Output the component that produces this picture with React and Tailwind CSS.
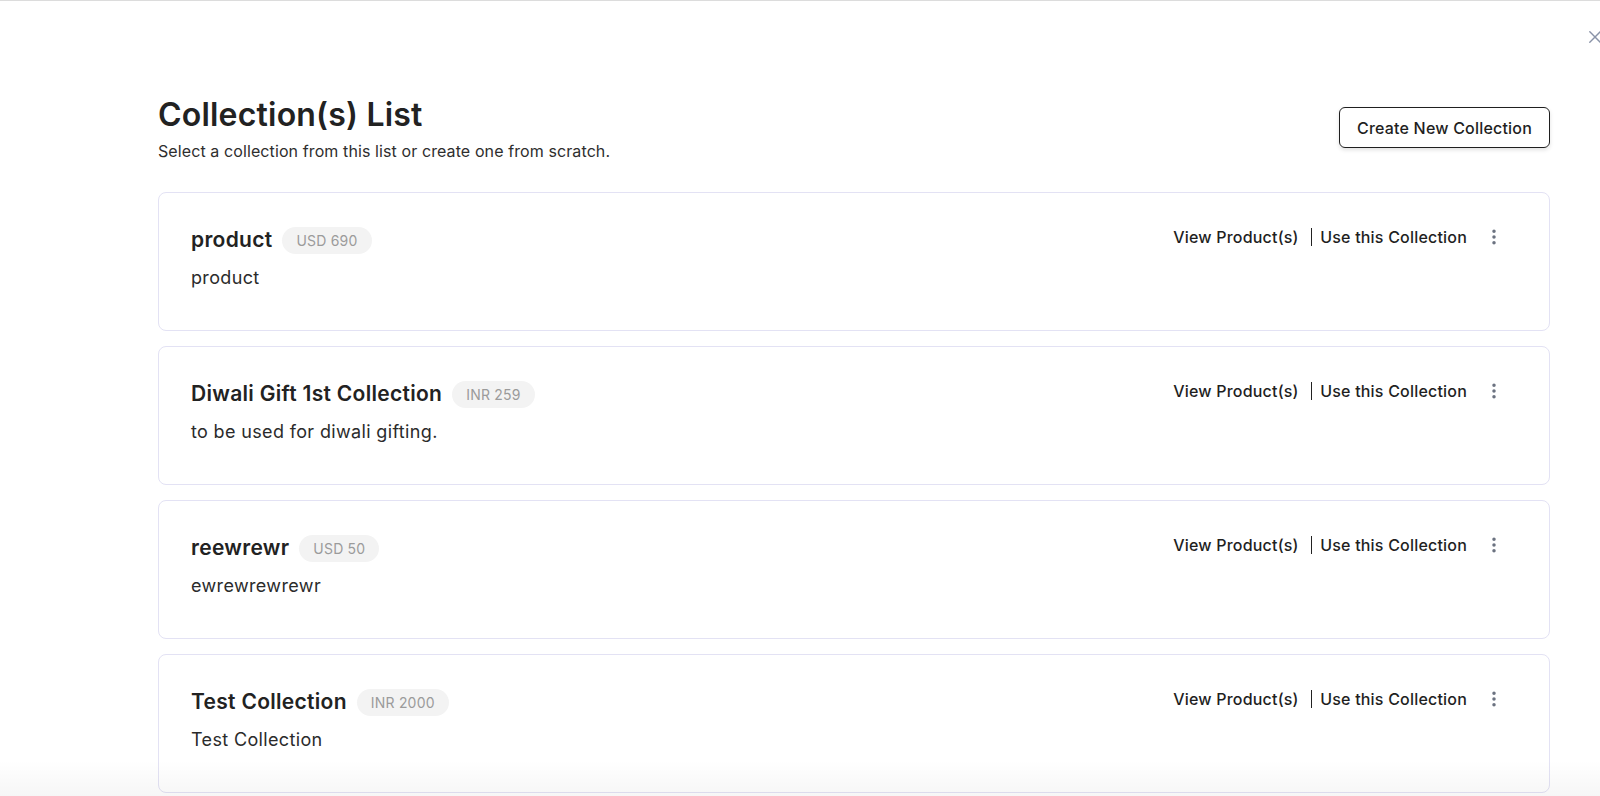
import { EllipsisVertical } from 'lucide-react';

const collections = [
  { name: 'product', price: 'USD 690', description: 'product' },
  { name: 'Diwali Gift 1st Collection', price: 'INR 259', description: 'to be used for diwali gifting.' },
  { name: 'reewrewr', price: 'USD 50', description: 'ewrewrewrewr' },
  { name: 'Test Collection', price: 'INR 2000', description: 'Test Collection' },
];

const CollectionCard = ({ item }) => (
  <div className="border border-[#e3e2f4] rounded-lg pl-8 pr-[45px] pt-8 pb-[38px] flex justify-between items-start">
    <div className="mt-[1px]">
      <div className="flex items-center gap-[10px] h-[28px]">
        <h3 className="text-[21px] font-semibold text-[#222222] tracking-[0.3px]">{item.name}</h3>
        <span className="h-[27px] px-[14px] flex items-center rounded-full bg-[#f3f3f3] text-[14px] text-[#9b9b9b] tracking-[0.2px]">
          {item.price}
        </span>
      </div>
      <p className="mt-[10px] text-[18px] leading-[28px] text-[#2b2b2b] tracking-[0.35px]">{item.description}</p>
    </div>
    <div className="flex items-center h-[24px] text-[16px] font-medium text-[#1f1f1f] tracking-[0.2px]">
      <button className="mr-[12px]">View Product(s)</button>
      <span className="w-[1.5px] h-[18px] bg-[#222222]"></span>
      <button className="ml-[8px]">Use this Collection</button>
      <button className="ml-[17px] text-[#6b7280]">
        <EllipsisVertical size={20} strokeWidth={2.2} />
      </button>
    </div>
  </div>
);

const App = () => {
  return (
    <div
      className="relative w-full h-[796px] overflow-hidden bg-white border-t border-[#dcdcdc]"
      style={{ fontFamily: 'Inter, "Noto Sans", sans-serif' }}
    >
      {/* Close */}
      <button className="absolute top-[30px] left-[1589px] text-[#8a93a8]">
        <svg width="12" height="12" viewBox="0 0 12 12" fill="none" stroke="currentColor" strokeWidth="1.4" strokeLinecap="round">
          <path d="M0.8 0.8 L11.2 11.2 M11.2 0.8 L0.8 11.2" />
        </svg>
      </button>

      <div className="pl-[158px] pr-[50px] pt-[94px]">
        {/* Header */}
        <div className="flex justify-between items-start">
          <div>
            <h1 className="text-[32px] leading-[40px] font-semibold text-[#222222] tracking-[0.2px]">Collection(s) List</h1>
            <p className="mt-1 text-[16px] leading-[24px] text-[#2e2e2e] tracking-[0.1px]">
              Select a collection from this list or create one from scratch.
            </p>
          </div>
          <button className="mt-[12px] w-[211px] h-[41px] border border-[#1f1f1f] rounded-md text-[16px] font-medium text-[#1f1f1f] tracking-[0.2px] shadow-[0_2px_4px_rgba(0,0,0,0.12)]">
            Create New Collection
          </button>
        </div>

        {/* List */}
        <div className="mt-[29px] flex flex-col gap-[15px]">
          {collections.map((item) => (
            <CollectionCard key={item.name} item={item} />
          ))}
        </div>
      </div>

      {/* bottom fade */}
      <div className="absolute bottom-0 left-0 right-0 h-[36px] pointer-events-none bg-gradient-to-t from-[rgba(0,0,0,0.035)] to-transparent"></div>
    </div>
  );
};

export default App;
